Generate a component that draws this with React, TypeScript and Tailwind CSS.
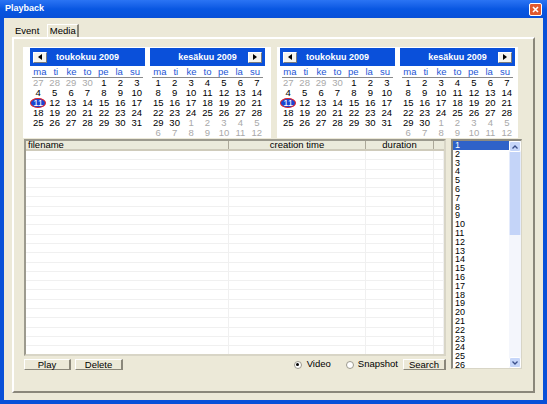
import React from "react";

type Cell = { d: number; grey?: boolean; today?: boolean };

const range = (a: number, b: number, grey = false): Cell[] => {
  const out: Cell[] = [];
  for (let i = a; i <= b; i++) out.push({ d: i, grey });
  return out;
};

// May 2009 starts on a Friday, June on a Monday
const MAY: Cell[] = [...range(27, 30, true), ...range(1, 31)].map((c) =>
  !c.grey && c.d === 11 ? { ...c, today: true } : c
);
const JUNE: Cell[] = [...range(1, 30), ...range(1, 12, true)];

const DAYS = ["ma", "ti", "ke", "to", "pe", "la", "su"];

const NavBtn = ({ dir }: { dir: "left" | "right" }) => (
  <div className="w-[14px] h-[11px] bg-[#f5f4ef] border border-t-white border-l-white border-r-[#7b7b7b] border-b-[#7b7b7b] flex items-center justify-center">
    <svg width="4" height="6" viewBox="0 0 4 6">
      {dir === "left" ? <path d="M4 0 L0 3 L4 6 Z" fill="#000" /> : <path d="M0 0 L4 3 L0 6 Z" fill="#000" />}
    </svg>
  </div>
);

const Month = ({ title, cells, prev, next }: { title: string; cells: Cell[]; prev?: boolean; next?: boolean }) => (
  <div className="w-[115px] flex flex-col">
    <div className="h-[18px] bg-[#0a50da] flex items-center px-[3px]">
      <div className="w-[14px]">{prev && <NavBtn dir="left" />}</div>
      <div className="flex-1 text-center text-white font-bold text-[9px] leading-[18px]">{title}</div>
      <div className="w-[14px]">{next && <NavBtn dir="right" />}</div>
    </div>
    <div className="grid grid-cols-7 mt-[1px] mx-[2px] border-b border-[#8a8a8a] h-[11px] text-[#2456d6] text-[9.5px] leading-[10px] text-center">
      {DAYS.map((d) => (
        <span key={d}>{d}</span>
      ))}
    </div>
    <div className="grid grid-cols-7 auto-rows-[10px] text-[9.5px] leading-[10px] text-center">
      {cells.map((c, i) => (
        <div key={i} className="flex items-center justify-center">
          {c.today ? (
            <span className="w-[16px] h-[10px] rounded-[50%] border border-[#e0202a] bg-[#1846d2] text-white leading-[8px] flex items-center justify-center">
              {c.d}
            </span>
          ) : (
            <span className={c.grey ? "text-[#a9a9a9]" : "text-black"}>{c.d}</span>
          )}
        </div>
      ))}
    </div>
  </div>
);

const Btn = ({ label, w }: { label: string; w: string }) => (
  <div
    className={`${w} h-[11px] bg-[#ece9d8] border-t border-l border-t-white border-l-white border-r-2 border-b border-r-[#8a877a] border-b-[#8a877a] text-[9.5px] leading-[9px] text-center text-black`}
  >
    {label}
  </div>
);

const COLS = ["w-[203px]", "w-[137px]", "w-[68px]", "flex-1"];
const ROWS = Array.from({ length: 22 }, (_, i) => i);
const ITEMS = Array.from({ length: 26 }, (_, i) => i + 1);

export default function App() {
  return (
    <div className="w-[547px] h-[404px] bg-[#0850d8] flex flex-col font-['Liberation_Sans',Arial,sans-serif] overflow-hidden">
      {/* title bar */}
      <div className="h-[18px] flex items-center justify-between pl-[5px] pr-[5px] bg-linear-to-b from-[#2a74f4] via-[#0857e2] to-[#0850d8]">
        <span className="text-white font-bold text-[9px]">Playback</span>
        <div className="w-[13px] h-[13px] rounded-[2px] bg-[#e0582e] border border-white flex items-center justify-center">
          <svg width="7" height="7" viewBox="0 0 7 7">
            <path d="M1 1 L6 6 M6 1 L1 6" stroke="#fff" strokeWidth="1.6" />
          </svg>
        </div>
      </div>

      {/* client area */}
      <div className="flex-1 mx-[4px] mb-[4px] bg-[#ece9d8] flex flex-col">
        {/* tabs */}
        <div className="h-[19px] flex items-end pl-[11px]">
          <div className="h-[13px] text-[9.5px] leading-[12px] text-black pt-[1px]">Event</div>
          <div className="ml-[8px] w-[32px] h-[13px] border-t border-l border-t-white border-l-white border-r-2 border-r-[#8a877a] text-[9.5px] leading-[12px] text-center text-black">
            Media
          </div>
        </div>

        {/* panel */}
        <div className="ml-[8px] w-[523px] h-[356px] border-2 border-t-white border-l-white border-r-[#8a877a] border-b-[#8a877a] pt-[8px] pl-[9px] flex flex-col">
          {/* calendars */}
          <div className="flex gap-[6px]">
            <div className="bg-white flex gap-[5px] pl-[7px] pr-[6px] pt-[1px] h-[91px]">
              <Month title="toukokuu 2009" cells={MAY} prev />
              <Month title="kesäkuu 2009" cells={JUNE} next />
            </div>
            <div className="bg-white flex gap-[5px] pl-[3px] pr-[3px] pt-[1px] h-[91px]">
              <Month title="toukokuu 2009" cells={MAY} prev />
              <Month title="kesäkuu 2009" cells={JUNE} next />
            </div>
          </div>

          <div className="flex gap-[5px] mt-[1px] ml-[1px]">
            {/* list + controls */}
            <div className="w-[422px] flex flex-col">
              <div className="h-[217px] bg-white border-t-2 border-l-2 border-t-[#9c9a8e] border-l-[#9c9a8e] border-r-2 border-b-2 border-r-[#d8d5c6] border-b-[#d8d5c6] flex flex-col overflow-hidden">
                <div className="h-[10px] flex bg-[#ebeadb] border-b-2 border-[#cfcbbb] text-[9.5px] leading-[8px] text-black">
                  <div className="w-[203px] pl-[2px] border-r border-[#aca899]">filename</div>
                  <div className="w-[137px] text-center border-r border-[#aca899]">creation time</div>
                  <div className="w-[68px] text-center border-r border-[#aca899]">duration</div>
                  <div className="flex-1" />
                </div>
                <div className="flex-1 flex overflow-hidden">
                  {COLS.map((c, ci) => (
                    <div key={ci} className={`${c} border-r border-[#f0f0f0] flex flex-col`}>
                      {ROWS.map((r) => (
                        <div key={r} className="h-[9.3px] shrink-0 border-b border-[#f0f0f0]" />
                      ))}
                    </div>
                  ))}
                </div>
              </div>

              <div className="mt-[3px] h-[11px] flex items-center">
                <Btn label="Play" w="w-[47px]" />
                <div className="ml-[4px]">
                  <Btn label="Delete" w="w-[48px]" />
                </div>
                <div className="flex-1 flex items-center justify-end text-[9.5px] text-black">
                  <span className="w-[8px] h-[8px] rounded-full bg-white border border-[#9c9a8e] flex items-center justify-center">
                    <span className="w-[3px] h-[3px] rounded-full bg-black" />
                  </span>
                  <span className="ml-[5px]">Video</span>
                  <span className="ml-[15px] w-[8px] h-[8px] rounded-full bg-white border border-[#9c9a8e]" />
                  <span className="ml-[4px]">Snapshot</span>
                  <div className="ml-[5px]">
                    <Btn label="Search" w="w-[43px]" />
                  </div>
                </div>
              </div>
            </div>

            {/* channel list */}
            <div className="w-[71px] h-[230px] bg-white border-t-2 border-l-2 border-t-[#8c8a80] border-l-[#8c8a80] border-r border-b border-r-[#d8d5c6] border-b-[#d8d5c6] flex">
              <div className="flex-1 flex flex-col text-[9px] leading-[8.8px] text-black">
                {ITEMS.map((n) => (
                  <div key={n} className={`h-[8.8px] pl-[2px] ${n === 1 ? "bg-[#2f62c8] text-white" : ""}`}>
                    {n}
                  </div>
                ))}
              </div>
              <div className="w-[12px] flex flex-col bg-[#f4f6fc]">
                <div className="h-[11px] bg-[#c6d6f9] border border-white rounded-[2px] flex items-center justify-center">
                  <svg width="6" height="4" viewBox="0 0 6 4">
                    <path d="M0.5 3.5 L3 1 L5.5 3.5" stroke="#3a4f8a" strokeWidth="1.3" fill="none" />
                  </svg>
                </div>
                <div className="h-[83px] bg-[#c4d4f8] border-x border-[#e4ebfc]" />
                <div className="flex-1" />
                <div className="h-[11px] bg-[#c6d6f9] border border-white rounded-[2px] flex items-center justify-center">
                  <svg width="6" height="4" viewBox="0 0 6 4">
                    <path d="M0.5 0.5 L3 3 L5.5 0.5" stroke="#3a4f8a" strokeWidth="1.3" fill="none" />
                  </svg>
                </div>
              </div>
            </div>
          </div>
        </div>
      </div>
    </div>
  );
}
